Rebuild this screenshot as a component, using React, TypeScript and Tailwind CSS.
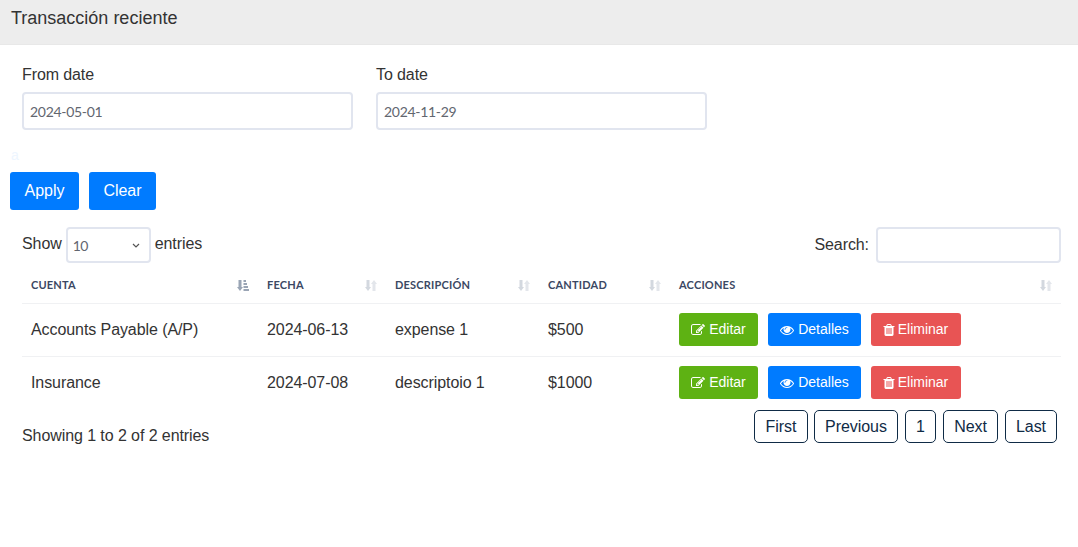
function SortIcon({ active }: { active?: boolean }) {
  return (
    <svg width="12" height="11" viewBox="0 0 12 11" className="block">
      <path d="M1.500 0h3v7h1.500L3 11 0 7h1.500z" fill={active ? "#9aa5b5" : "#d3d8df"} />
      {active ? (
        <path d="M6.500 0h2.500v2h-2.500zM6.500 3h3.500v2h-3.500zM6.500 6h4.500v2h-4.500zM6.500 9h5.500v2h-5.500z" fill="#9aa5b5" />
      ) : (
        <path d="M7.500 11V4H6L9 0 12 4H10.500v7z" fill="#e3e6eb" />
      )}
    </svg>
  );
}

function EditIcon() {
  return (
    <svg width="14" height="14" viewBox="0 0 1792 1792" fill="currentColor">
      <path d="M888 1184l116-116-152-152-116 116v56h96v96h56zm440-720q-16-16-33 1l-350 350q-17 17-1 33t33-1l350-350q17-17 1-33zm80 594v190q0 119-84.500 203.500t-203.500 84.500h-832q-119 0-203.500-84.500t-84.500-203.500v-832q0-119 84.500-203.500t203.500-84.500h832q63 0 117 25 15 7 18 23 3 17-9 29l-49 49q-14 14-32 8-23-6-45-6h-832q-66 0-113 47t-47 113v832q0 66 47 113t113 47h832q66 0 113-47t47-113v-126q0-13 9-22l64-64q15-15 35-7t20 29zm-96-738l288 288-672 672h-288v-288zm444 132l-92 92-288-288 92-92q28-28 68-28t68 28l152 152q28 28 28 68t-28 68z" />
    </svg>
  );
}

function EyeIcon() {
  return (
    <svg width="14" height="14" viewBox="0 0 1792 1792" fill="currentColor">
      <path d="M1664 960q-152-236-381-353 61 104 61 225 0 185-131.500 316.500t-316.500 131.500-316.500-131.500-131.500-316.500q0-121 61-225-229 117-381 353 133 205 333.500 326.500t434.500 121.500 434.500-121.500 333.500-326.500zm-720-384q0-20-14-34t-34-14q-125 0-214.500 89.500t-89.500 214.500q0 20 14 34t34 14 34-14 14-34q0-86 61-147t147-61q20 0 34-14t14-34zm848 384q0 34-20 69-140 230-376.500 368.500t-499.500 138.500-499.500-139-376.500-368q-20-35-20-69t20-69q140-229 376.500-368t499.500-139 499.500 139 376.500 368q20 35 20 69z" />
    </svg>
  );
}

function TrashIcon() {
  return (
    <svg width="14" height="14" viewBox="0 0 1792 1792" fill="currentColor">
      <path d="M704 1376v-704q0-14-9-23t-23-9h-64q-14 0-23 9t-9 23v704q0 14 9 23t23 9h64q14 0 23-9t9-23zm256 0v-704q0-14-9-23t-23-9h-64q-14 0-23 9t-9 23v704q0 14 9 23t23 9h64q14 0 23-9t9-23zm256 0v-704q0-14-9-23t-23-9h-64q-14 0-23 9t-9 23v704q0 14 9 23t23 9h64q14 0 23-9t9-23zm-544-992h448l-48-117q-7-9-17-11h-317q-10 2-17 11zm928 32v64q0 14-9 23t-23 9h-96v948q0 83-47 143.500t-113 60.500h-832q-66 0-113-58.500t-47-141.500v-952h-96q-14 0-23-9t-9-23v-64q0-14 9-23t23-9h309l70-167q15-37 54-63t79-26h320q40 0 79 26t54 63l70 167h309q14 0 23 9t9 23z" />
    </svg>
  );
}

const columns = [
  { label: "Cuenta", w: "w-[236px]", active: true },
  { label: "Fecha", w: "w-[128px]" },
  { label: "Descripción", w: "w-[153px]" },
  { label: "Cantidad", w: "w-[131px]" },
  { label: "Acciones", w: "" },
];

const rows = [
  ["Accounts Payable (A/P)", "2024-06-13", "expense 1", "$500"],
  ["Insurance", "2024-07-08", "descriptoio 1", "$1000"],
];

function ActionButtons() {
  return (
    <div className="flex gap-[10px]">
      <button className="h-[33px] w-[79px] rounded-[3px] bg-[#5eb213] text-white text-[14px] flex items-center justify-center gap-[4px]">
        <EditIcon /> Editar
      </button>
      <button className="h-[33px] w-[93px] rounded-[3px] bg-[#007bff] text-white text-[14px] flex items-center justify-center gap-[4px]">
        <EyeIcon /> Detalles
      </button>
      <button className="h-[33px] w-[90px] rounded-[3px] bg-[#e85454] pr-[2px] text-white text-[14px] flex items-center justify-center gap-[2px]">
        <TrashIcon /> Eliminar
      </button>
    </div>
  );
}

function DateField({ label, value }: { label: string; value: string }) {
  return (
    <div className="w-[331px]">
      <div className="h-[24px] leading-[24px] text-[16px] tracking-[-0.1px] text-[#333]">{label}</div>
      <input
        readOnly
        value={value}
        className="mt-[5px] h-[38px] w-full rounded-[4px] border-2 border-[#e1e5ef] bg-white px-[6px] text-[14px] tracking-[-0.3px] text-[#62666f] font-['Lato',sans-serif] outline-none"
      />
    </div>
  );
}

export default function App() {
  return (
    <div className="h-[547px] w-[1078px] overflow-hidden bg-white font-['Liberation_Sans',Arial,sans-serif] text-[#212529]">
      <div className="h-[45px] border-b border-[#e8e8e8] bg-[#ededed] pl-[11px] text-[18px] leading-[36px] text-[#333]">
        Transacción reciente
      </div>

      <div className="flex gap-[23px] pl-[22px] pt-[18px]">
        <DateField label="From date" value="2024-05-01" />
        <DateField label="To date" value="2024-11-29" />
      </div>

      <div className="mt-[16px] h-[18px] pl-[11px] text-[14px] leading-[18px] text-[#eef6ff]">a</div>

      <div className="mt-[8px] flex gap-[10px] pl-[10px] tracking-[-0.05px]">
        <button className="h-[38px] w-[69px] rounded-[3px] bg-[#007bff] text-[16px] text-white">Apply</button>
        <button className="h-[38px] w-[67px] rounded-[3px] bg-[#007bff] text-[16px] text-white">Clear</button>
      </div>

      <div className="mt-[17px] ml-[22px] mr-[17px] flex h-[36px] items-center justify-between text-[16px] tracking-[-0.08px] text-[#333]">
        <div className="flex items-center">
          <span className="-translate-y-px">Show</span>
          <div className="ml-[4px] mr-[4px] flex h-[36px] w-[85px] items-center justify-between rounded-[4px] border-2 border-[#e1e5ef] pl-[5px] pr-[9px] text-[14px] tracking-[-0.6px] text-[#62666f] font-['Lato',sans-serif]">
            10
            <svg width="8" height="5" viewBox="0 0 8 5">
              <path d="M1 1l3 3 3-3" fill="none" stroke="#555" strokeWidth="1.200" />
            </svg>
          </div>
          <span className="-translate-y-px">entries</span>
        </div>
        <div className="flex items-center">
          <span>Search:</span>
          <input readOnly className="ml-[7px] h-[36px] w-[185px] rounded-[4px] border-2 border-[#e1e5ef] bg-white outline-none" />
        </div>
      </div>

      <table className="mt-[4px] ml-[22px] w-[1039px] table-fixed border-collapse">
        <thead>
          <tr className="h-[36px] border-b border-[#f0f1f3]">
            {columns.map((c) => (
              <th key={c.label} className={`${c.w} px-[9px] pt-px text-left`}>
                <div className="flex items-center justify-between font-['Lato',sans-serif] text-[11px] font-bold uppercase tracking-[0.2px] text-[#3b4863]">
                  {c.label}
                  <SortIcon active={c.active} />
                </div>
              </th>
            ))}
          </tr>
        </thead>
        <tbody className="text-[16px] tracking-[-0.08px] text-[#333]">
          {rows.map((r) => (
            <tr key={r[0]} className="h-[53px] border-b border-[#f0f1f3] last:border-b-0">
              {r.map((v) => (
                <td key={v} className="px-[9px]">{v}</td>
              ))}
              <td className="px-[9px] tracking-normal">
                <ActionButtons />
              </td>
            </tr>
          ))}
        </tbody>
      </table>

      <div className="ml-[22px] mr-[21px] mt-px flex items-start justify-between">
        <div className="pt-[17px] text-[16px] leading-[18px] tracking-[-0.08px] text-[#333]">Showing 1 to 2 of 2 entries</div>
        <div className="flex gap-[7px] text-[16px] tracking-[-0.06px] text-[#0f2b46]">
          {[
            ["First", "w-[54px] -mr-px"],
            ["Previous", "w-[84px]"],
            ["1", "w-[31px]"],
            ["Next", "w-[55px]"],
            ["Last", "w-[52px]"],
          ].map(([t, w]) => (
            <button key={t} className={`${w} h-[33px] rounded-[5px] border border-[#0f2b46] bg-white`}>
              {t}
            </button>
          ))}
        </div>
      </div>
    </div>
  );
}
